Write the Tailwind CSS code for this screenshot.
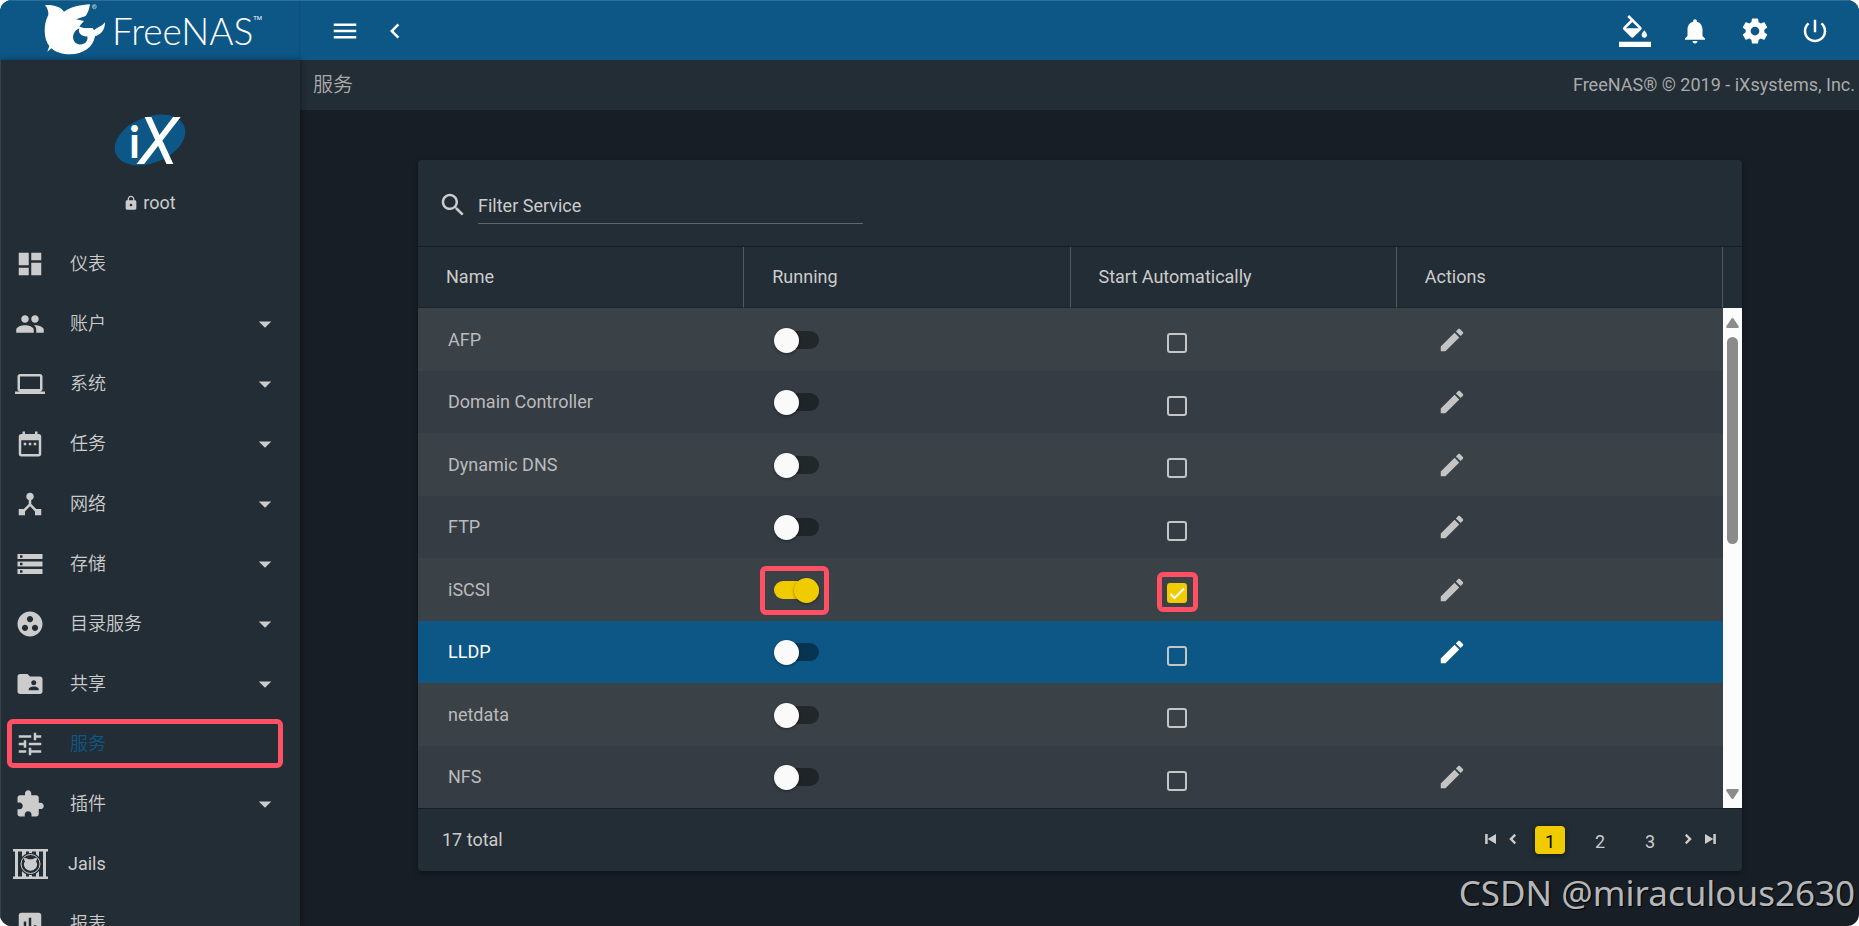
<!DOCTYPE html>
<html lang="zh-CN">
<head>
    <meta charset="UTF-8">
    <meta name="viewport" content="width=device-width, initial-scale=1.0">
    <title>FreeNAS - 服务</title>
    <script src="https://cdn.jsdelivr.net/npm/@tailwindcss/browser@4"></script>
</head>
<body class="bg-white font-[Roboto,'Noto_Sans_CJK_SC',sans-serif] text-lg text-[#cccccc]">
    <div class="relative flex h-screen flex-col overflow-hidden rounded-xl bg-[#171e25]">

        <!-- Top bar -->
        <header class="flex h-15 shrink-0 items-center border-t border-[#2f6d97] bg-[#0d5787] text-white">
            <a href="#" aria-label="FreeNAS" class="flex h-full w-[300px] shrink-0 items-center border-r border-[#0c4f7c] pl-10">
                <svg class="h-[60px] w-[70px] shrink-0" viewBox="0 0 210 180" fill="currentColor">
                    <path fill-rule="evenodd" d="M15 12C38 10 62 16 72 32C92 18 122 11 150 10C147 26 144 36 137 45L108 55L132 60L118 76C124 79 128 81 132 81H158C160 84 161 86 162 88C172 78 187 76 195 63C195 86 184 100 165 106C160 138 130 160 90 160C68 160 48 154 34 142L22 152L28 135C10 114 10 68 25 42C26 30 22 21 15 12ZM118 82C98 90 94 114 106 125C122 137 146 128 142 106C128 108 112 98 118 82Z"/>
                    <circle cx="163" cy="17" r="6" fill="none" stroke="currentColor" stroke-width="1.5"/>
                    <path d="M161 20v-6h3q2 1.500 0 3l2 3" fill="none" stroke="currentColor" stroke-width="1.500"/>
                </svg>
                <span class="pl-0.5 font-[Lato,sans-serif] text-[37px] leading-none font-light">FreeNAS</span>
                <span class="self-start pt-[14px] text-[6px] leading-none">TM</span>
            </a>
            <div class="flex flex-1 items-center gap-5 pl-[30px]">
                <button type="button" aria-label="Toggle menu"><svg class="size-[30px]" viewBox="0 0 24 24" fill="currentColor"><path d="M3 18h18v-2H3v2zm0-5h18v-2H3v2zm0-7v2h18V6H3z"/></svg></button>
                <button type="button" aria-label="Collapse menu"><svg class="size-[30px]" viewBox="0 0 24 24" fill="currentColor"><path d="M15.410 7.410L14 6l-6 6 6 6 1.410-1.410L10.830 12z"/></svg></button>
            </div>
            <div class="flex items-center gap-[30px] pr-[29px]">
                <button type="button" aria-label="Theme"><svg class="-m-px size-8" viewBox="0 0 24 24" fill="currentColor"><path d="M16.560 8.940L7.620 0 6.210 1.410l2.380 2.380-5.150 5.150c-.59.59-.59 1.540 0 2.120l5.500 5.500c.29.29.68.44 1.060.44s.77-.15 1.060-.44l5.500-5.500c.59-.58.59-1.530 0-2.120zM5.210 10L10 5.210 14.790 10H5.210zM19 11.500s-2 2.170-2 3.500c0 1.100.9 2 2 2s2-.9 2-2c0-1.330-2-3.500-2-3.500zM0 20h24v4H0z"/></svg></button>
                <button type="button" aria-label="Notifications"><svg class="size-[30px]" viewBox="0 0 24 24" fill="currentColor"><path d="M12 22c1.100 0 2-.9 2-2h-4c0 1.100.89 2 2 2zm6-6v-5c0-3.070-1.640-5.640-4.500-6.320V4c0-.83-.67-1.500-1.500-1.500s-1.500.67-1.500 1.500v.68C7.630 5.360 6 7.920 6 11v5l-2 2v1h16v-1l-2-2z"/></svg></button>
                <button type="button" aria-label="Settings"><svg class="size-[30px]" viewBox="0 0 24 24" fill="currentColor"><path d="M19.430 12.980c.04-.32.07-.64.07-.98s-.03-.66-.07-.98l2.110-1.650c.19-.15.24-.42.12-.64l-2-3.460c-.12-.22-.39-.3-.61-.22l-2.490 1c-.52-.4-1.080-.73-1.690-.98l-.38-2.650C14.460 2.180 14.250 2 14 2h-4c-.25 0-.46.18-.49.42l-.38 2.650c-.61.25-1.170.59-1.690.98l-2.490-1c-.23-.09-.49 0-.61.22l-2 3.460c-.13.22-.07.49.12.64l2.110 1.650c-.04.32-.07.65-.07.98s.03.66.07.98l-2.110 1.650c-.19.15-.24.42-.12.64l2 3.460c.12.22.39.3.61.22l2.490-1c.52.4 1.080.73 1.690.98l.38 2.650c.03.24.24.42.49.42h4c.25 0 .46-.18.49-.42l.38-2.650c.61-.25 1.170-.59 1.690-.98l2.490 1c.23.09.49 0 .61-.22l2-3.460c.12-.22.07-.49-.12-.64l-2.110-1.650zM12 15.500c-1.930 0-3.500-1.570-3.500-3.500s1.570-3.500 3.500-3.500 3.500 1.570 3.500 3.500-1.570 3.500-3.500 3.500z"/></svg></button>
                <button type="button" aria-label="Power"><svg class="size-[30px]" viewBox="0 0 24 24" fill="currentColor"><path d="M13 3h-2v10h2V3zm4.830 2.170l-1.420 1.420C17.990 7.860 19 9.810 19 12c0 3.870-3.130 7-7 7s-7-3.130-7-7c0-2.190 1.010-4.140 2.580-5.420L6.170 5.170C4.230 6.820 3 9.260 3 12c0 4.970 4.030 9 9 9s9-4.030 9-9c0-2.740-1.230-5.180-3.170-6.830z"/></svg></button>
            </div>
        </header>

        <div class="flex min-h-0 flex-1">
            <!-- Sidebar -->
            <aside class="z-10 w-[300px] shrink-0 overflow-hidden border-l border-[#38424a] bg-[#232d35] shadow-[1px_0_6px_rgba(0,0,0,0.4)]">
                <div class="flex h-[174px] flex-col items-center pt-[54px] pr-0.5">
                    <svg class="h-[52px] w-[72px] shrink-0 overflow-visible" viewBox="0 0 72 52">
                        <ellipse cx="36" cy="26" rx="37" ry="23" transform="rotate(-22 36 26)" fill="#0d5787"/>
                        <text x="15" y="44" fill="#fff" font-family="Lato, sans-serif" font-size="43" font-weight="700">i</text>
                        <text x="24" y="50" fill="#fff" font-family="Roboto, sans-serif" font-size="66" font-weight="400" font-style="italic">X</text>
                    </svg>
                    <div class="mt-[25px] flex items-center gap-1">
                        <svg class="size-4" viewBox="0 0 24 24" fill="currentColor"><path d="M18 8h-1V6c0-2.760-2.240-5-5-5S7 3.240 7 6v2H6c-1.100 0-2 .9-2 2v10c0 1.100.9 2 2 2h12c1.100 0 2-.9 2-2V10c0-1.100-.9-2-2-2zm-6 9c-1.100 0-2-.9-2-2s.9-2 2-2 2 .9 2 2-.9 2-2 2zm3.100-9H8.900V6c0-1.710 1.390-3.100 3.100-3.100 1.710 0 3.100 1.390 3.100 3.100v2z"/></svg>
                        <span class="leading-6">root</span>
                    </div>
                </div>
                <nav><ul id="menu"></ul></nav>
            </aside>

            <!-- Content -->
            <main class="flex min-w-0 flex-1 flex-col">
                <div class="flex h-[50px] shrink-0 items-center justify-between bg-[#232d35] pr-1 pl-[13px] text-[#aaaaaa]">
                    <h1 class="text-xl font-[350]">服务</h1>
                    <span>FreeNAS® © 2019 - iXsystems, Inc.</span>
                </div>

                <section class="mt-[50px] mr-[117px] ml-[118px] rounded-sm bg-[#232d35] shadow-[0_2px_6px_rgba(0,0,0,0.4)]">
                    <div class="flex h-[87px] items-center border-b border-[#171e25] pt-1 pl-5">
                        <svg class="mr-[10px] size-[30px] shrink-0" viewBox="0 0 24 24" fill="currentColor"><path d="M15.500 14h-.79l-.28-.27C15.410 12.590 16 11.110 16 9.500 16 5.910 13.090 3 9.500 3S3 5.910 3 9.500 5.910 16 9.500 16c1.610 0 3.090-.59 4.230-1.570l.27.28v.79l5 4.990L20.490 19l-4.990-5zm-6 0C7.010 14 5 11.990 5 9.500S7.010 5 9.500 5 14 7.010 14 9.500 11.990 14 9.500 14z"/></svg>
                        <input type="text" aria-label="Filter Service" placeholder="Filter Service" class="mt-0.5 h-9 w-[385px] border-b border-[#5f686e] bg-transparent outline-none placeholder:text-[#cccccc]">
                    </div>

                    <div class="flex">
                        <table class="w-full flex-1 table-fixed border-separate border-spacing-0 text-left">
                            <thead>
                                <tr class="h-[61px]">
                                    <th class="w-1/4 border-r border-b border-r-[#505a61] border-b-[#1c242b] pl-7 font-normal">Name</th>
                                    <th class="w-1/4 border-r border-b border-r-[#505a61] border-b-[#1c242b] pl-7 font-normal">Running</th>
                                    <th class="w-1/4 border-r border-b border-r-[#505a61] border-b-[#1c242b] pl-7 font-normal">Start Automatically</th>
                                    <th class="w-1/4 border-r border-b border-r-[#505a61] border-b-[#1c242b] pl-7 font-normal">Actions</th>
                                </tr>
                            </thead>
                            <tbody id="services"></tbody>
                        </table>
                        <!-- Scrollbar -->
                        <div class="flex w-[19px] shrink-0 flex-col pt-[61px]">
                            <div class="flex flex-1 flex-col items-center bg-[#fcfcfc] text-[#8b8b8b]">
                                <svg class="mt-[10px] h-[10px] w-[13px]" viewBox="0 0 13 10" fill="currentColor"><path d="M5.500 .6q1-1 2 0l5.200 7.700q.3 1.700-1 1.700H1.300q-1.300 0-1-1.700z"/></svg>
                                <div class="mt-[9px] h-[207px] w-[11px] rounded-full bg-[#8b8b8b]"></div>
                                <svg class="mt-auto mb-[9px] h-[10px] w-[13px]" viewBox="0 0 13 10" fill="currentColor"><path d="M5.500 9.400q1 1 2 0l5.200-7.700q.3-1.700-1-1.700H1.300q-1.300 0-1 1.700z"/></svg>
                            </div>
                        </div>
                    </div>

                    <footer class="flex h-[63px] items-center justify-between border-t border-[#171e25] pr-[22px] pl-6">
                        <span>17 total</span>
                        <nav class="flex items-center">
                            <button type="button" aria-label="First page" class="mb-0.5"><svg class="size-[20px]" viewBox="0 0 24 24" fill="currentColor"><path d="M5 6h3v12H5zM8 12l10-6v12z"/></svg></button>
                            <button type="button" aria-label="Previous page" class="mb-0.5 ml-[3px]"><svg class="size-[18px]" viewBox="0 0 24 24" fill="currentColor"><path d="M16 7.500L14 5l-7 7 7 7 2-2.500L11.500 12z"/></svg></button>
                            <button type="button" class="ml-[13px] h-7 w-[30px] rounded-sm bg-[#f0cb00] pt-1 leading-6 text-black shadow-[0_1px_5px_rgba(0,0,0,0.5)]">1</button>
                            <button type="button" class="ml-5 h-7 w-[30px] pt-1 leading-6">2</button>
                            <button type="button" class="ml-5 h-7 w-[30px] pt-1 leading-6">3</button>
                            <button type="button" aria-label="Next page" class="mb-0.5 ml-[14px]"><svg class="size-[18px]" viewBox="0 0 24 24" fill="currentColor"><path d="M8 7.500L10 5l7 7-7 7-2-2.500L12.500 12z"/></svg></button>
                            <button type="button" aria-label="Last page" class="mb-0.5 ml-[3px]"><svg class="size-[20px]" viewBox="0 0 24 24" fill="currentColor"><path d="M16 6h3v12h-3zM16 12L6 6v12z"/></svg></button>
                        </nav>
                    </footer>
                </section>
            </main>
        </div>

        <div class="absolute right-1 bottom-2 font-['Noto_Sans',sans-serif] text-[35px] leading-[50px] text-[#b5b7b9] [text-shadow:1px_1px_1px_#000]">CSDN @miraculous2630</div>
    </div>

    <script>
        const menu = [
            { label: '仪表', icon: 'M3 13h8V3H3v10zm0 8h8v-6H3v6zm10 0h8V11h-8v10zm0-18v6h8V3h-8z' },
            { label: '账户', more: true, icon: 'M16 11c1.660 0 2.990-1.340 2.990-3S17.660 5 16 5c-1.660 0-3 1.340-3 3s1.340 3 3 3zm-8 0c1.660 0 2.990-1.340 2.990-3S9.660 5 8 5C6.340 5 5 6.340 5 8s1.340 3 3 3zm0 2c-2.330 0-7 1.170-7 3.500V19h14v-2.500c0-2.330-4.670-3.500-7-3.500zm8 0c-.29 0-.62.02-.97.05 1.160.84 1.970 1.970 1.970 3.450V19h6v-2.500c0-2.330-4.670-3.500-7-3.500z' },
            { label: '系统', more: true, icon: 'M20 18c1.100 0 2-.9 2-2V6c0-1.100-.9-2-2-2H4c-1.100 0-2 .9-2 2v10c0 1.100.9 2 2 2H0v2h24v-2h-4zM4 6h16v10H4V6z' },
            { label: '任务', more: true, icon: 'M9 11H7v2h2v-2zm4 0h-2v2h2v-2zm4 0h-2v2h2v-2zm2-7h-1V2h-2v2H8V2H6v2H5c-1.110 0-1.990.9-1.990 2L3 20c0 1.100.89 2 2 2h14c1.100 0 2-.9 2-2V6c0-1.100-.9-2-2-2zm0 16H5V9h14v11z' },
            { label: '网络', more: true, icon: 'M17 16l-4-4V8.820C14.160 8.400 15 7.300 15 6c0-1.660-1.340-3-3-3S9 4.340 9 6c0 1.300.84 2.400 2 2.820V12l-4 4H3v5h5v-3.050l4-4.200 4 4.200V21h5v-5h-4z' },
            { label: '存储', more: true, icon: 'M2 20h20v-4H2v4zm2-3h2v2H4v-2zM2 4v4h20V4H2zm4 3H4V5h2v2zm-4 7h20v-4H2v4zm2-3h2v2H4v-2z' },
            { label: '目录服务', more: true, icon: 'M12 2C6.480 2 2 6.480 2 12s4.480 10 10 10 10-4.480 10-10S17.520 2 12 2zM8 17.500c-1.380 0-2.500-1.120-2.500-2.500s1.120-2.500 2.500-2.500 2.500 1.120 2.500 2.500-1.120 2.500-2.500 2.500zM9.500 8c0-1.380 1.120-2.500 2.500-2.500s2.500 1.120 2.500 2.500-1.120 2.500-2.500 2.500S9.500 9.380 9.500 8zm6.500 9.500c-1.380 0-2.500-1.120-2.500-2.500s1.120-2.500 2.500-2.500 2.500 1.120 2.500 2.500-1.120 2.500-2.500 2.500z' },
            { label: '共享', more: true, icon: 'M20 6h-8l-2-2H4c-1.100 0-1.990.9-1.990 2L2 18c0 1.100.9 2 2 2h16c1.100 0 2-.9 2-2V8c0-1.100-.9-2-2-2zm-5 3c1.100 0 2 .9 2 2s-.9 2-2 2-2-.9-2-2 .9-2 2-2zm4 8h-8v-1c0-1.330 2.670-2 4-2s4 .67 4 2v1z' },
            { label: '服务', active: true, icon: 'M3 17v2h6v-2H3zM3 5v2h10V5H3zm10 16v-2h8v-2h-8v-2h-2v6h2zM7 9v2H3v2h4v2h2V9H7zm14 4v-2H11v2h10zm-6-4h2V7h4V5h-4V3h-2v6z' },
            { label: '插件', more: true, icon: 'M20.500 11H19V7c0-1.100-.9-2-2-2h-4V3.500C13 2.120 11.880 1 10.500 1S8 2.120 8 3.500V5H4c-1.100 0-1.990.9-1.990 2v3.800H3.500c1.490 0 2.700 1.210 2.700 2.700s-1.210 2.700-2.700 2.700H2V20c0 1.100.9 2 2 2h3.800v-1.500c0-1.490 1.210-2.700 2.700-2.700 1.490 0 2.700 1.210 2.700 2.700V22H17c1.100 0 2-.9 2-2v-4h1.500c1.380 0 2.500-1.120 2.500-2.500S21.880 11 20.500 11z' },
            { label: 'Jails', jail: true },
            { label: '报表', icon: 'M19 3H5c-1.100 0-2 .9-2 2v14c0 1.100.9 2 2 2h14c1.100 0 2-.9 2-2V5c0-1.100-.9-2-2-2zM9 17H7v-7h2v7zm4 0h-2V7h2v10zm4 0h-2v-4h2v4z' },
        ];

        const jailIcon = `<svg class="h-[30px] w-[35px] shrink-0" viewBox="0 0 35 30" fill="currentColor">
            <path d="M0 0h35v2.500H0zM0 27.500h35V30H0zM2 2h3v26H2zM9 2h4v26H9zM16 2h3v26h-3zM23 2h3v26h-3zM30 2h3v26h-3z"/>
            <circle cx="17.500" cy="15" r="11" fill="#232d35"/>
            <circle cx="17.500" cy="15" r="9.500" fill="none" stroke="currentColor" stroke-width="1"/>
            <path d="M11 9q3 0 4.500 1.200h4Q21 9 24 9q0 2-1 3.500 2.500 3.500-.5 7-5 4.500-10 0-3-4-.5-7Q11 11 11 9z"/>
        </svg>`;

        document.getElementById('menu').innerHTML = menu.map(m => `
            <li class="relative">
                <a href="#" class="flex h-15 items-center ${m.jail ? 'pl-3' : 'pl-[14px]'}">
                    ${m.jail ? jailIcon : `<svg class="size-[30px] shrink-0" viewBox="0 0 24 24" fill="currentColor"><path d="${m.icon}"/></svg>`}
                    <span class="flex-1 ${m.jail ? 'pl-5' : 'pl-[25px] font-[350]'} ${m.active ? 'text-[#0d5787]' : ''}">${m.label}</span>
                    ${m.more ? '<svg class="mr-5 size-[30px]" viewBox="0 0 24 24" fill="currentColor"><path d="M7 10l5 5 5-5z"/></svg>' : ''}
                </a>
                ${m.active ? '<span class="pointer-events-none absolute top-[5px] right-[17px] left-[6px] h-[49px] rounded-md border-5 border-[#ff5163]"></span>' : ''}
            </li>`).join('');

        const services = [
            { name: 'AFP', edit: true },
            { name: 'Domain Controller', edit: true },
            { name: 'Dynamic DNS', edit: true },
            { name: 'FTP', edit: true },
            { name: 'iSCSI', edit: true, on: true },
            { name: 'LLDP', edit: true, hover: true },
            { name: 'netdata' },
            { name: 'NFS', edit: true },
        ];

        document.getElementById('services').innerHTML = services.map((s, i) => `
            <tr class="${i % 2 ? 'h-[62px]' : 'h-[63px]'} ${s.hover ? 'bg-[#0d5787] text-white' : i % 2 ? 'bg-[#353c43] text-[#bbbbbb]' : 'bg-[#3a4147] text-[#bbbbbb]'}">
                <td class="pl-[30px]">${s.name}</td>
                <td class="pl-[30px]">
                    <div class="relative flex w-[45px]">
                        <input type="checkbox" role="switch" aria-label="${s.name} running" ${s.on ? 'checked' : ''}
                            class="relative h-[18px] w-[45px] appearance-none rounded-full bg-black/40 before:absolute before:-top-[3px] before:left-0 before:size-[25px] before:rounded-full before:bg-[#fafafa] before:shadow-[0_1px_3px_rgba(0,0,0,0.4)] checked:bg-[#f0cb00] checked:before:left-5 checked:before:bg-[#f0cb00]">
                        ${s.on ? '<span class="pointer-events-none absolute -top-[15px] -left-[14px] h-[49px] w-[69px] rounded-md border-5 border-[#ff5163]"></span>' : ''}
                    </div>
                </td>
                <td class="pt-[7px] pl-[96px]">
                    <div class="relative flex size-5">
                        <input type="checkbox" aria-label="${s.name} start automatically" ${s.on ? 'checked' : ''}
                            class="size-5 appearance-none rounded-[3px] border-2 border-[#c4c5c6] checked:border-[#f0cb00] checked:bg-[#f0cb00]">
                        ${s.on ? `<svg class="pointer-events-none absolute inset-0 size-5" viewBox="0 0 20 20" fill="none" stroke="#fff" stroke-width="2"><path d="M3.500 11l4 4L17 5.500"/></svg>
                        <span class="pointer-events-none absolute -top-[11px] -left-[10px] h-10 w-[41px] rounded-md border-5 border-[#ff5163]"></span>` : ''}
                    </div>
                </td>
                <td class="pl-10">
                    ${s.edit ? `<button type="button" aria-label="Edit ${s.name}" class="block ${s.hover ? 'text-white' : 'text-[#c4c4c4]'}"><svg class="size-[30px]" viewBox="0 0 24 24" fill="currentColor"><path d="M3 17.250V21h3.750L17.810 9.940l-3.750-3.750L3 17.250zM20.710 7.040c.39-.39.39-1.020 0-1.410l-2.340-2.340c-.39-.39-1.020-.39-1.410 0l-1.830 1.830 3.750 3.750 1.830-1.830z"/></svg></button>` : ''}
                </td>
            </tr>`).join('');
    </script>
</body>
</html>
